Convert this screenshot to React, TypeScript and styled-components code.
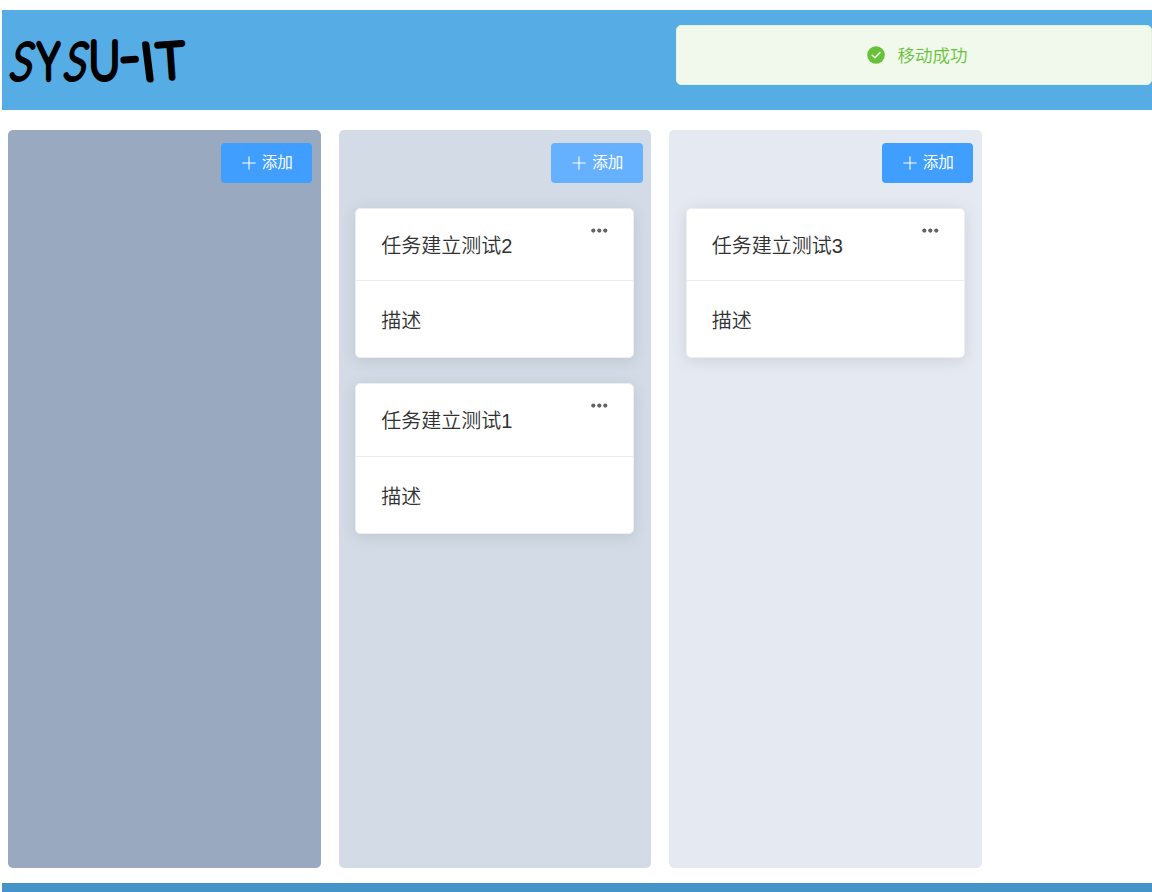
import React from "react";
import styled, { createGlobalStyle } from "styled-components";

const GlobalStyle = createGlobalStyle`
  * { box-sizing: border-box; }
  body {
    margin: 0;
    background: #fff;
    color: #303133;
    font-family: "Liberation Sans", "Noto Sans CJK SC", sans-serif;
    font-weight: 350;
    overflow: hidden;
  }
`;

const Page = styled.div`
  display: flex;
  flex-direction: column;
  height: 892px;
  padding: 10px 0 0 2px;
`;

const Header = styled.header`
  height: 100px;
  flex: none;
  background: #56ace5;
`;

const Logo = styled.svg`
  display: block;
  width: 200px;
  height: 100px;
  font-family: Lato, sans-serif;
  font-weight: 100;
  fill: #000;
  stroke: #000;
  stroke-linejoin: round;
`;

const Board = styled.main`
  display: flex;
  gap: 18px;
  height: 773px;
  flex: none;
  padding: 20px 0 15px 6.25px;
`;

const Column = styled.section<{ $tone: string }>`
  display: flex;
  flex-direction: column;
  width: 312.5px;
  height: 738px;
  flex: none;
  padding: 13px 0 0;
  border-radius: 5px;
  background: ${(p) => p.$tone};
`;

const AddButton = styled.button<{ $hover?: boolean }>`
  display: flex;
  align-items: center;
  align-self: flex-end;
  gap: 6px;
  width: 91.5px;
  height: 40px;
  margin-right: 8.6px;
  padding: 0 0 0 21px;
  border: 0;
  border-radius: 4px;
  background: ${(p) => (p.$hover ? "#66b1ff" : "#409eff")};
  color: #fff;
  font-family: inherit;
  font-size: 15.6px;
  font-weight: 400;
  line-height: 20px;
  white-space: nowrap;
`;

const PlusIcon = styled.svg`
  width: 14px;
  height: 14px;
  flex: none;
  margin-top: -1px;
`;

const CardList = styled.div`
  display: flex;
  flex-direction: column;
  gap: 25px;
  padding: 25px 0 0 16.5px;
`;

const Card = styled.article`
  width: 279px;
  height: 150.4px;
  border: 1px solid #ebeef5;
  border-radius: 5px;
  background: #fff;
  box-shadow: 0 2.5px 15px rgba(0, 0, 0, 0.1);
`;

const CardHeader = styled.div`
  display: flex;
  justify-content: space-between;
  height: 72.4px;
  padding: 21.8px 25px 0;
  border-bottom: 1px solid #ebeef5;
  font-size: 20px;
  line-height: 30px;
`;

const CardBody = styled.div`
  padding: 24.8px 25px;
  font-size: 20px;
  line-height: 30px;
`;

const MoreIcon = styled.svg`
  width: 18px;
  height: 6px;
  flex: none;
  margin: -3px 0 0 0;
`;

const Toast = styled.div`
  position: absolute;
  top: 25px;
  left: 676px;
  display: flex;
  align-items: center;
  justify-content: center;
  gap: 13px;
  width: 476px;
  height: 60px;
  padding-left: 6px;
  border: 1px solid #e1f3d8;
  border-radius: 5px;
  background: #f0f9eb;
  color: #67c23a;
  font-size: 17.5px;
  line-height: 26px;
`;

const ToastText = styled.span`
  padding-top: 2px;
`;

const CheckIcon = styled.svg`
  width: 18px;
  height: 18px;
  flex: none;
`;

const Footer = styled.footer`
  flex: 1;
  background: #4594c9;
`;

const letters = [
  { ch: "S", t: "translate(6.5 68.5) skewX(-12) scale(.82 1)", size: 50, w: 5.2 },
  { ch: "Y", t: "translate(36 68.5) scale(.74 1)", size: 50, w: 6.4 },
  { ch: "S", t: "translate(60.5 68.5) skewX(-12) scale(.82 1)", size: 50, w: 5.2 },
  { ch: "U", t: "translate(87 68.5) scale(.84 1)", size: 51, w: 6.2 },
  { ch: "-", t: "translate(119 65) rotate(-4) scale(1.05 1)", size: 50, w: 6.6 },
  { ch: "I", t: "translate(142 68.5) skewX(7)", size: 49, w: 6.8 },
  { ch: "T", t: "translate(157 68.5) rotate(-4) scale(.96 1)", size: 48, w: 6.4 },
];

type Task = { title: string; body: string };

const columns: { tone: string; hover?: boolean; tasks: Task[] }[] = [
  { tone: "#99a9bf", tasks: [] },
  {
    tone: "#d3dce6",
    hover: true,
    tasks: [
      { title: "任务建立测试2", body: "描述" },
      { title: "任务建立测试1", body: "描述" },
    ],
  },
  { tone: "#e5e9f2", tasks: [{ title: "任务建立测试3", body: "描述" }] },
];

function TaskCard({ title, body }: Task) {
  return (
    <Card>
      <CardHeader>
        <span>{title}</span>
        <MoreIcon viewBox="0 0 18 6" fill="#606266">
          <circle cx="3.3" cy="2.6" r="2.1" />
          <circle cx="9.3" cy="2.6" r="2.1" />
          <circle cx="15.3" cy="2.6" r="2.1" />
        </MoreIcon>
      </CardHeader>
      <CardBody>{body}</CardBody>
    </Card>
  );
}

export default function App() {
  return (
    <Page>
      <GlobalStyle />
      <Header>
        <Logo viewBox="0 0 200 100" role="img" aria-label="SYSU-IT">
          {letters.map((l, i) => (
            <text key={i} transform={l.t} fontSize={l.size} strokeWidth={l.w}>
              {l.ch}
            </text>
          ))}
        </Logo>
      </Header>
      <Board>
        {columns.map((c) => (
          <Column key={c.tone} $tone={c.tone}>
            <AddButton $hover={c.hover}>
              <PlusIcon viewBox="0 0 14 14" stroke="#fff" strokeWidth="1.1" strokeLinecap="round">
                <path d="M7 .8V13.2M.8 7H13.2" />
              </PlusIcon>
              添加
            </AddButton>
            <CardList>
              {c.tasks.map((t) => (
                <TaskCard key={t.title} {...t} />
              ))}
            </CardList>
          </Column>
        ))}
      </Board>
      <Footer />
      <Toast>
        <CheckIcon viewBox="0 0 18 18">
          <circle cx="9" cy="9" r="8.8" fill="#67c23a" />
          <path
            d="M5.2 9.2 8 11.8 13 6.6"
            fill="none"
            stroke="#f0f9eb"
            strokeWidth="1.5"
            strokeLinecap="round"
            strokeLinejoin="round"
          />
        </CheckIcon>
        <ToastText>移动成功</ToastText>
      </Toast>
    </Page>
  );
}
